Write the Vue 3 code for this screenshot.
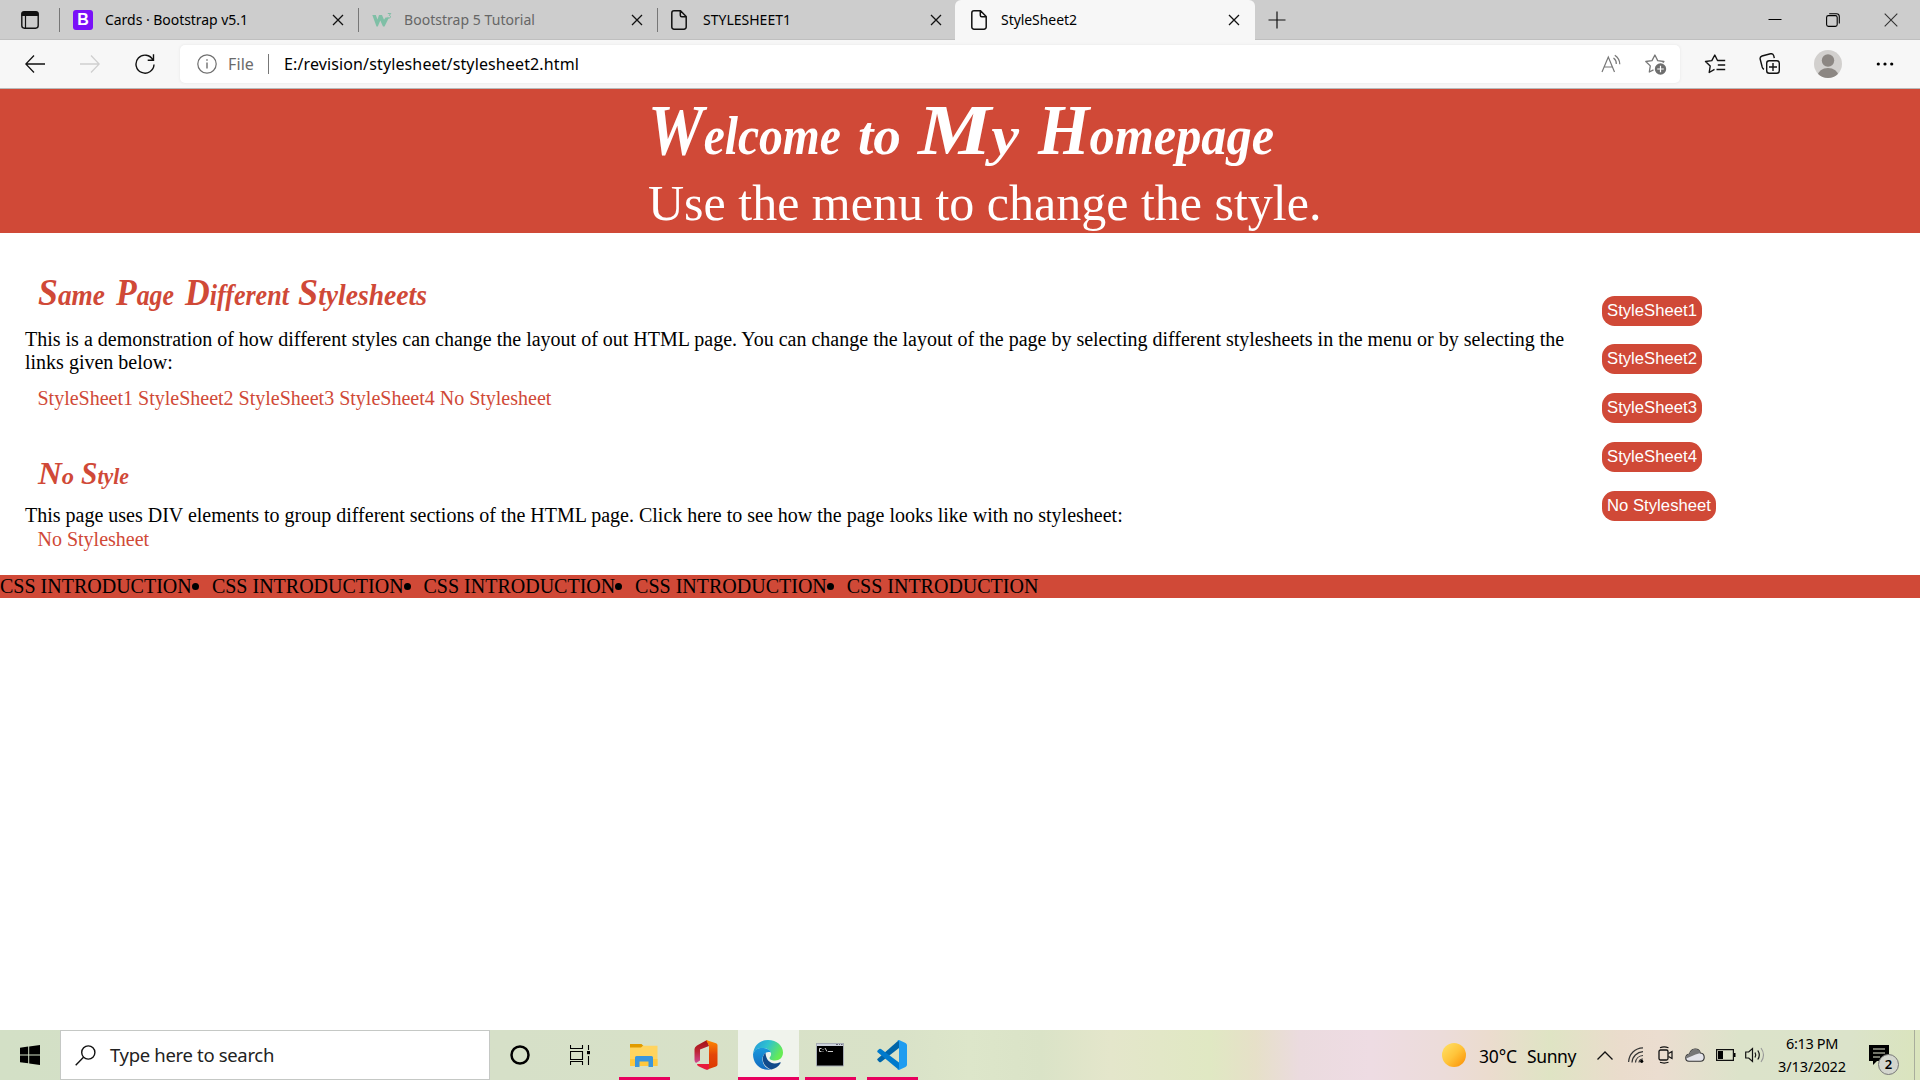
<script setup>
const tabs = [
  { title: 'Cards · Bootstrap v5.1', icon: 'bootstrap', w: 143 },
  { title: 'Bootstrap 5 Tutorial', icon: 'w3', w: 131, dim: true },
  { title: 'STYLESHEET1', icon: 'doc', w: 88, narrow: true },
  { title: 'StyleSheet2', icon: 'doc', w: 76, active: true },
]
const links = ['StyleSheet1', 'StyleSheet2', 'StyleSheet3', 'StyleSheet4', 'No Stylesheet']
const welcome = [
  { t: 'Welcome', x: 648, w: 193 },
  { t: 'to', x: 858, w: 43, plain: true },
  { t: 'My', x: 918, w: 101 },
  { t: 'Homepage', x: 1038, w: 236 },
]
const same = [
  { t: 'Same', x: 38, w: 67 },
  { t: 'Page', x: 116, w: 58 },
  { t: 'Different', x: 185, w: 104 },
  { t: 'Stylesheets', x: 298, w: 129 },
]
const noStyle = [
  { t: 'No', x: 38, w: 36 },
  { t: 'Style', x: 81, w: 48 },
]

// Spreads the letters of an element so that its text takes the given width.
const vFit = {
  mounted(el, { value }) {
    const natural = el.getBoundingClientRect().width
    el.style.letterSpacing = (value - natural) / el.textContent.length + 'px'
  },
}
</script>

<template>
  <div class="screen">
    <div class="tabbar">
      <div class="tabmenu">
        <svg width="20" height="20" viewBox="0 0 20 20"><rect x="1.8" y="1.8" width="16.4" height="16.4" rx="2.6" fill="none" stroke="#111" stroke-width="1.4" /><path d="M1.5 6V4a2.5 2.5 0 0 1 2.5-2.5h12A2.5 2.5 0 0 1 18.500 4v2z" fill="#111" /><path d="M5.500 6v12" stroke="#111" stroke-width="1.200" /></svg>
      </div>
      <div v-for="t in tabs" :key="t.title" class="tab" :class="{ active: t.active, dim: t.dim, narrow: t.narrow }">
        <span v-if="t.icon === 'bootstrap'" class="bs">B</span>
        <span v-else-if="t.icon === 'w3'" class="w3">
          <svg width="20" height="20" viewBox="0 0 20 20"><path d="M.3 5h3.500l1.700 4.500L7 5h3l2 4.800L13.500 7.500H17L12.500 16.500H11L8.300 10.500 5.800 16.500H4.500z" fill="#7fbfa6" /><path d="M15.800 3.500h3l-1.600 1.900c1.600 0 2 2.600-.1 2.700-.7 0-1.200-.2-1.500-.7" fill="none" stroke="#7fbfa6" stroke-width="1" /></svg>
        </span>
        <svg v-else class="doc" width="16" height="20" viewBox="0 0 16 20"><path d="M3 .8h6.500l5.700 5.700V17a2.200 2.200 0 0 1-2.200 2.200H3A2.200 2.200 0 0 1 .8 17V3A2.200 2.200 0 0 1 3 .8zM9.300 1v4.200a1.500 1.500 0 0 0 1.500 1.500H15" fill="none" stroke="#111" stroke-width="1.500" /></svg>
        <span class="title"><span v-fit="t.w">{{ t.title }}</span></span>
        <svg class="x" width="12" height="12" viewBox="0 0 12 12"><path d="M1 1l10 10M11 1L1 11" stroke="#111" stroke-width="1.300" /></svg>
      </div>
      <svg class="plus" width="18" height="18" viewBox="0 0 18 18"><path d="M9 .5v17M.5 9h17" stroke="#111" stroke-width="1.200" /></svg>
      <div class="wincontrols">
        <svg width="14" height="14" viewBox="0 0 14 14"><path d="M.5 6.500h13" stroke="#000" /></svg>
        <svg width="14" height="14" viewBox="0 0 14 14"><rect x=".6" y="2.600" width="10.600" height="10.800" rx="1.800" fill="none" stroke="#000" stroke-width="1.100" /><path d="M3.200.7h7.300a2.800 2.800 0 0 1 2.800 2.800v7" fill="none" stroke="#000" stroke-width="1.100" /></svg>
        <svg width="14" height="14" viewBox="0 0 14 14"><path d="M.7.7l12.600 12.600M13.300.7L.7 13.300" stroke="#333" stroke-width="1.100" /></svg>
      </div>
    </div>

    <div class="toolbar">
      <svg class="nav" width="20" height="20" viewBox="0 0 20 20"><path d="M9 1.500L.8 10 9 18.500M1 10h19" fill="none" stroke="#111" stroke-width="1.300" /></svg>
      <svg class="nav fwd" width="20" height="20" viewBox="0 0 20 20"><path d="M11 1.500l8.200 8.500-8.200 8.500M19 10H0" fill="none" stroke="#cfcfcf" stroke-width="1.300" /></svg>
      <svg class="nav reload" width="20" height="20" viewBox="0 0 20 20"><path d="M18 6A9 9 0 1 0 19 10.500M18.500.3V6.200H12.700" fill="none" stroke="#111" stroke-width="1.400" /></svg>
      <div class="address">
        <svg class="info" width="20" height="20" viewBox="0 0 20 20"><circle cx="10" cy="10" r="9.200" fill="none" stroke="#6f6f6f" stroke-width="1.200" /><path d="M10 8.500v6M10 5.300v1.500" stroke="#6f6f6f" stroke-width="1.400" /></svg>
        <span class="scheme"><span v-fit="26">File</span></span>
        <span class="sep"></span>
        <span class="url"><span v-fit="295">E:/revision/stylesheet/stylesheet2.html</span></span>
        <svg class="read" width="20" height="20" viewBox="0 0 20 20"><path d="M1 18L7.300 3 13.500 18M3.300 13h8" fill="none" stroke="#777" stroke-width="1.200" /><path d="M12.500 4a7 7 0 0 1 2.800 6M13.800 1.200a11 11 0 0 1 5 9" fill="none" stroke="#777" stroke-width="1.200" /></svg>
        <svg class="addfav" width="24" height="24" viewBox="0 0 24 24"><path d="M9.500 17.800L5.300 20l1-6.100L1.800 9.500 8 8.600 10.900 3l2.800 5.600 6.200.9-1.200 1.300" fill="none" stroke="#777" stroke-width="1.300" stroke-linejoin="round" /><circle cx="16.500" cy="17" r="5.700" fill="#6e6e6e" /><path d="M16.500 13.700v6.600M13.200 17h6.600" stroke="#fff" stroke-width="1.200" /></svg>
      </div>
      <svg class="act" width="22" height="22" viewBox="0 0 22 22"><path d="M10.500 16.300L5.200 19.500l1-6.500L1.500 8.500 7.800 7.600 10.800 2l2.700 5.500h7.700M13.800 12h7.400M12.500 16.500h8.700" fill="none" stroke="#111" stroke-width="1.400" stroke-linejoin="round" /></svg>
      <svg class="act coll" width="22" height="22" viewBox="0 0 22 22"><rect x="7.700" y="7.700" width="12.600" height="12.600" rx="2.500" fill="none" stroke="#111" stroke-width="1.400" /><path d="M14 10v8M10 14h8M5 16.200C3.500 15.800 3.500 15 3.200 14L1.200 6.300C.8 4.500 1.500 3.500 3 3l8.500-2.200c1.700-.4 2.700.3 3.200 1.800l.6 2.500" fill="none" stroke="#111" stroke-width="1.400" /></svg>
      <svg class="avatar" width="28" height="28" viewBox="0 0 28 28"><defs><clipPath id="av"><circle cx="14" cy="14" r="14" /></clipPath></defs><g clip-path="url(#av)"><path d="M0 0h28v28H0z" fill="#d2d0ce" /><circle cx="14" cy="10.500" r="6.200" fill="#8c8783" /><ellipse cx="14" cy="26" rx="10.300" ry="8" fill="#8c8783" /></g></svg>
      <svg class="dots" width="18" height="6" viewBox="0 0 18 6"><circle cx="2.300" cy="3" r="1.600" /><circle cx="9" cy="3" r="1.600" /><circle cx="15.700" cy="3" r="1.600" /></svg>
    </div>

    <div class="page">
      <div class="banner">
        <svg class="h1" width="1920" height="85"><text v-for="p in welcome" :key="p.t" :x="p.x" y="65" :textLength="p.w" lengthAdjust="spacingAndGlyphs"><template v-if="p.plain">{{ p.t }}</template><template v-else><tspan class="cap">{{ p.t[0] }}</tspan>{{ p.t.slice(1) }}</template></text></svg>
        <p>Use the menu to change the style.</p>
      </div>
      <div class="body">
        <div class="content">
          <svg class="h2" width="600" height="60"><text v-for="p in same" :key="p.t" :x="p.x" y="35" :textLength="p.w" lengthAdjust="spacingAndGlyphs"><tspan class="cap">{{ p.t[0] }}</tspan>{{ p.t.slice(1) }}</text></svg>
          <p>This is a demonstration of how different styles can change the layout of out HTML page. You can change the layout of the page by selecting different stylesheets in the menu or by selecting the links given below:</p>
          <div class="links"><a v-for="l in links" :key="l">{{ l + ' ' }}</a></div>
          <svg class="h3" width="600" height="50"><text v-for="p in noStyle" :key="p.t" :x="p.x" y="29" :textLength="p.w" lengthAdjust="spacingAndGlyphs"><tspan class="cap">{{ p.t[0] }}</tspan>{{ p.t.slice(1) }}</text></svg>
          <p>This page uses DIV elements to group different sections of the HTML page. Click here to see how the page looks like with no stylesheet:</p>
          <div class="links last"><a>No Stylesheet</a></div>
        </div>
        <div class="menu">
          <a v-for="l in links" :key="l"><span v-fit="l[0] === 'N' ? 104 : 90">{{ l }}</span></a>
        </div>
      </div>
      <div class="footer">
        <span v-for="n in 5" :key="n" class="intro"><i v-if="n > 1"></i>CSS INTRODUCTION</span>
      </div>
    </div>

    <div class="taskbar">
      <div class="start"><svg width="20" height="20" viewBox="0 0 20 20"><path d="M0 2.700L8.200 1.600V9.400H0zM9.200 1.400L20 0v9.400H9.200zM0 10.400h8.200v7.900L0 17.200zM9.200 10.400H20V20L9.200 18.400z" /></svg></div>
      <div class="search">
        <svg width="21" height="21" viewBox="0 0 21 21"><circle cx="13.300" cy="7.500" r="6.600" fill="none" stroke="#111" stroke-width="1.400" /><path d="M8.500 12.300L.7 20.200" stroke="#111" stroke-width="1.400" /></svg>
        <span class="ph"><span v-fit="164">Type here to search</span></span>
      </div>
      <div class="cell"><svg width="20" height="20" viewBox="0 0 20 20"><circle cx="10" cy="10" r="8.500" fill="none" stroke="#000" stroke-width="2.500" /></svg></div>
      <div class="cell"><svg width="20" height="20" viewBox="0 0 20 20"><path d="M.5 0v3.500h12V0M.5 20v-3.500h12V20M.5 6.500h12v8H.5zM18.500 0v5M18.500 11v9" fill="none" stroke="#000" stroke-width="1.100" /><path d="M17 6h3v3.200h-3z" /></svg></div>
      <div class="cell run explorer"><svg width="28" height="24" viewBox="0 0 28 24"><path d="M0 1h11.500l2 2L12 5H0z" fill="#e19b00" /><path d="M0 4.500h11l2-1.800h14.500V23H0z" fill="#ffd45f" /><path d="M0 16h27.500v7H0z" fill="#ffc83d" /><path d="M5 24V14.500Q5 13 6.500 13h15q1.500 0 1.500 1.500V24h-4.500v-5.500h-9V24z" fill="#3a96dd" /></svg></div>
      <div class="cell office"><svg width="24" height="30" viewBox="0 0 24 30"><defs><linearGradient id="of" x2="0" y2="1"><stop stop-color="#a30f14" /><stop offset=".5" stop-color="#bd2635" /><stop offset="1" stop-color="#d04a96" /></linearGradient><linearGradient id="og" x2="0" y2="1"><stop stop-color="#ff8a00" /><stop offset=".5" stop-color="#e4460a" /><stop offset="1" stop-color="#dc3900" /></linearGradient></defs><path d="M13 0L3 5.500Q.5 7 .5 9v11q0 2 1.500 3l4-2.500V9.500L15 6z" fill="url(#of)" /><path d="M12 0l10 3.300q1.500.6 1.500 2V24.500q0 1.500-1.500 2L12.500 29.800 15 24V5.800z" fill="url(#og)" /><path d="M3 24h12v5q-2 1.300-4 .3L5 26.500Q3 25.500 3 24z" fill="#e81b3a" /></svg></div>
      <div class="cell run edge"><svg width="30" height="30" viewBox="0 0 30 30"><defs><linearGradient id="e1" x2="1" y2=".4"><stop stop-color="#2394dc" /><stop offset=".5" stop-color="#2fc2cf" /><stop offset="1" stop-color="#66eb55" /></linearGradient><linearGradient id="e2" x2="0" y2="1"><stop stop-color="#1a98dc" /><stop offset="1" stop-color="#1269bf" /></linearGradient></defs><path d="M0 14C1 5 7 0 15 0c9 0 15 6 15 12.500 0 5-3.500 8-8 8-4 0-5.500-1.500-5.500-2.500s2-1.500 1.500-5C17 9 12.500 8 9 8 4 8 1 11 0 14z" fill="url(#e1)" /><path d="M0 14C1.500 9.500 5 8 9 8c4.500 0 8 1.500 9 4.500C13 10.500 9 15 9.500 20c.3 5 4 9 9 9.500C9 31.500 0 25 0 14z" fill="url(#e2)" /><path d="M12.500 12.800C8 16.500 8.500 26 18.500 29.500c4-1 7-3 9-6.300.5-.8-.2-1.200-1-.8-7 3-13.500-.5-14-9.600z" fill="#114a8b" /></svg></div>
      <div class="cell run term"><svg width="28" height="24" viewBox="0 0 28 24"><path d="M.5.500h27v22.500H.5z" fill="#000" stroke="#a7adb5" /><path d="M1 1h26v2H1z" fill="#cdd3dc" /><path d="M20 1.500h2M23 1.500h1M25 1.500h1.500" stroke="#667" /><path d="M5.500 5.500H3.500v3h2M7 6v.8M7 8v.7M9 5l2 3.500M12 8.500h5" stroke="#ccc" fill="none" stroke-width="1" /></svg></div>
      <div class="cell run code"><svg width="30" height="30" viewBox="0 0 30 30"><path d="M.6 18.800L22 0v8L4 22q-1 .5-1.800-.1L.6 20.300q-.7-.8 0-1.500z" fill="#0065a9" /><path d="M.6 10.600L2.200 9Q3 8.300 4 9l18 13.500V30L.6 12.200q-.7-.8 0-1.600z" fill="#007acc" /><path d="M22 0l6.500 3q1.500.8 1.500 2.300v19.400q0 1.500-1.500 2.300L22 30q-1.500.1-2-.5 2 .5 2-1.500V2Q22 0 20 .5q1-.7 2-.5z" fill="#1f9cf0" /></svg></div>

      <div class="tray">
        <span class="sun"></span>
        <span class="temp"><span v-fit="38">30°C</span></span>
        <span class="sunny"><span v-fit="49">Sunny</span></span>
        <svg class="ic chev" width="16" height="9" viewBox="0 0 16 9"><path d="M.5 8.500L8 1l7.500 7.500" fill="none" stroke="#111" stroke-width="1.300" /></svg>
        <svg class="ic wifi" width="16" height="16" viewBox="0 0 16 16"><path d="M.6 15C1 7 7 1 15 .8M4 15.500C4.300 9.500 9 5 15 4.700M7.500 15.500C7.800 11.500 11 8.700 15 8.500M11 15.500c.2-2 2-3.500 4-3.500" fill="none" stroke="#333" stroke-width="1.200" /><circle cx="13.700" cy="14.300" r="1.600" /></svg>
        <svg class="ic cam" width="16" height="18" viewBox="0 0 16 18"><rect x="1" y="4" width="9" height="10" rx="1.500" fill="none" stroke="#111" stroke-width="1.300" /><path d="M10.500 7.500L14 5.500v7l-3.500-2M2 1.700Q6 .2 10.500 1.700M2 16.300Q6 17.800 10.500 16.300" fill="none" stroke="#111" stroke-width="1.200" /></svg>
        <svg class="ic cloud" width="20" height="14" viewBox="0 0 20 14"><path d="M4 13.300C-.5 13-.3 6.500 4.500 6 6-.5 14-.5 15.300 5c5 .3 5.400 8.300.2 8.300z" fill="#e4e4ea" stroke="#333" stroke-width="1.100" /><path d="M1.200 10.500L10.500 6.500l5-1.500C14-.5 6-.5 4.500 6 2 6.500.8 8 1.200 10.500z" fill="#777" /></svg>
        <svg class="ic batt" width="20" height="12" viewBox="0 0 20 12"><path d="M.6.600h16.800v10.800H.6z" fill="none" stroke="#111" stroke-width="1.200" /><path d="M2 2h5v8H2zM18 4h1.500v4H18z" /></svg>
        <svg class="ic vol" width="20" height="16" viewBox="0 0 20 16"><path d="M.7 5h3L7.500 1.500v13L3.700 11h-3z" fill="none" stroke="#111" stroke-width="1.200" /><path d="M10 5.500q1.500 2.500 0 5M12.800 3.500q3 4.500 0 9" fill="none" stroke="#111" stroke-width="1.200" /><path d="M16 1q5 7 0 14" fill="none" stroke="#999" stroke-width="1.100" /></svg>
        <div class="clock"><div><span v-fit="52">6:13 PM</span></div><div><span v-fit="68">3/13/2022</span></div></div>
        <div class="notif">
          <svg width="20" height="20" viewBox="0 0 20 20"><path d="M0 0h20v16H8l-4 4v-4H0z" /><path d="M4 4h12M4 8h12M4 12h7" stroke="#e4e8d2" stroke-width="1.200" /></svg>
          <span class="badge">2</span>
        </div>
        <span class="desk"></span>
      </div>
    </div>
  </div>
</template>

<style>
html, body { margin: 0; overflow: hidden; }
</style>

<style scoped>
* { box-sizing: border-box; }
svg { display: block; flex: none; }
span { white-space: nowrap; }
.screen { width: 1920px; height: 1080px; display: flex; flex-direction: column; background: #fff; overflow: hidden; font-family: "Liberation Serif", serif; font-size: 20px; line-height: 23px; color: #000; }
.tabbar, .toolbar, .taskbar { font-family: "Noto Sans", "Open Sans", sans-serif; flex: none; display: flex; align-items: center; }
.tabbar { height: 40px; background: #cdcdcd; box-shadow: inset 0 -1px #bfbfbf; }
.tabmenu { width: 59px; padding-left: 20px; }
.tab { width: 299px; height: 40px; display: flex; align-items: center; padding-left: 14px; font-size: 14px; background: linear-gradient(#777, #777) left center / 1px 24px no-repeat; }
.tab.narrow { width: 298px; }
.tab.narrow .doc { margin-right: 16px; }
.tab.narrow .x { margin-right: 13px; }
.tab.active { width: 300px; background: #f7f7f7; border-radius: 6px 6px 0 0; padding-left: 16px; }
.bs { width: 20px; height: 20px; border-radius: 3px; background: #7a10f8; color: #fff; font: bold 16px/20px "Liberation Sans", sans-serif; text-align: center; }
.w3, .bs { margin-right: 12px; }
.doc { margin-right: 14px; }
.tab .title { flex: 1; padding-bottom: 2px; }
.tab.dim { color: #666; }
.tab .x { margin-right: 14px; }
.tab.active .x { margin-right: 15px; }
.plus { margin-left: 13px; }
.wincontrols { margin-left: auto; display: flex; gap: 44px; padding-right: 22px; }
.toolbar { height: 49px; background: #f7f7f7; border-bottom: 1px solid #b9b9b9; padding-left: 25px; }
.fwd, .reload { margin-left: 35px; }
.address { margin-left: 25px; width: 1500px; height: 38px; border-radius: 5px; background: #fff; box-shadow: 0 0 3px #e4e4e4; display: flex; align-items: center; padding-left: 17px; font-size: 16px; }
.scheme { width: 51px; padding-left: 11px; color: #6b6b6b; }
.sep { width: 1px; height: 20px; background: #777; }
.url { padding-left: 15px; flex: 1; }
.read { margin-right: 23px; }
.addfav { margin-right: 12px; }
.act { margin-left: 24px; }
.coll { margin-left: 33px; }
.avatar { margin-left: 33px; }
.dots { margin-left: 34px; }

.page { flex: 1; }
.banner { height: 144px; background: #d04937; color: #fff; }
.banner p { margin: 0 0 0 648px; padding-top: 1px; font-size: 50px; line-height: 57px; white-space: nowrap; }
svg text { font-family: "Liberation Serif", serif; font-style: italic; font-weight: bold; fill: #d04937; }
.h1 { overflow: visible; }
.h1 text { fill: #fff; font-size: 54px; }
.h1 .cap { font-size: 71px; }
.h2 text { font-size: 29px; }
.h2 .cap { font-size: 38px; }
.h3 text { font-size: 23px; }
.h3 .cap { font-size: 31px; }
.body { height: 342px; display: flex; }
.content { width: 1590px; padding-top: 37px; }
.content p { margin: 0 25px; }
.content .h2 { height: 58px; }
.content .links { padding-left: 37.500px; color: #d04937; margin-top: 13px; white-space: pre; }
.content .h3 { margin-top: 45px; height: 49px; }
.content .links.last { margin-top: 1px; }
.menu { padding: 62.700px 0 0 12px; display: flex; flex-direction: column; align-items: flex-start; gap: 18.750px; }
.menu a { height: 30px; border-radius: 12.500px; background: #d04937; color: #fff; padding: 0 5px; font: 16.670px/29px "Liberation Sans", sans-serif; }
.footer { height: 23px; background: #d04937; display: flex; }
.intro { width: 211.600px; flex: none; display: flex; align-items: center; }
.intro:first-child { width: 192px; }
.intro i { width: 7px; height: 7px; border-radius: 50%; background: #000; margin-right: 13px; }

.taskbar { height: 50px; background: linear-gradient(90deg, #d3e0c6 0, #d6e0c8 500px, #d9e2c8 900px, #dde6ca 970px, #dae3c7 1040px, #e4e6cb 1110px, #e0e8c3 1210px, #e6e0c8 1255px, #ebdbdf 1300px, #eedce3 1370px, #ecdcda 1440px, #ebdcce 1490px, #dfe4c4 1550px, #eadccc 1620px, #ebddd0 1660px, #dce3ca 1740px, #dbe3ca 1850px, #dae4bd 1920px); }
.start { width: 60px; padding-left: 20px; }
.search { width: 430px; height: 50px; border: 1px solid #c5c8c5; background: #fff; display: flex; align-items: center; padding-left: 14px; font-size: 18.500px; color: #222; }
.ph { margin-left: 14px; padding-bottom: 2px; }
.cell { width: 60px; height: 50px; display: flex; align-items: center; justify-content: center; }
.run { border-bottom: 3px solid #e8005e; padding-top: 3px; }
.explorer { width: 51px; margin-left: 9px; padding-right: 2px; }
.office { width: 68px; padding-left: 4px; }
.edge { width: 61px; background: #f0f3ec; padding-right: 1px; }
.term { width: 51px; margin-left: 6px; padding-right: 2px; }
.code { width: 51px; margin-left: 11px; padding-right: 2px; }
.tray { flex: 1; display: flex; align-items: center; height: 50px; padding-left: 524px; font-size: 17.500px; }
.sun { width: 24px; height: 24px; border-radius: 50%; background: linear-gradient(135deg, #ffe36a, #ffc43a 50%, #fb8c00); }
.temp { width: 61px; padding-left: 13px; padding-top: 2px; }
.sunny { padding-top: 2px; width: 70px; }
.wifi { margin-left: 15px; }
.cam { margin-left: 14px; }
.cloud { margin-left: 11px; }
.batt { margin-left: 11px; }
.vol { margin-left: 9px; }
.clock { width: 94px; text-align: center; font-size: 14.500px; line-height: 23px; padding-bottom: 1px; }
.notif { position: relative; margin-left: 10px; width: 20px; height: 20px; }
.badge { position: absolute; left: 9px; top: 9px; width: 21px; height: 21px; border-radius: 50%; border: 1px solid #777; background: #d3d6ce; font-size: 13px; line-height: 19px; text-align: center; font-weight: 600; }
.desk { width: 1px; height: 50px; background: #a9ad9c; margin-left: 25px; }
</style>
